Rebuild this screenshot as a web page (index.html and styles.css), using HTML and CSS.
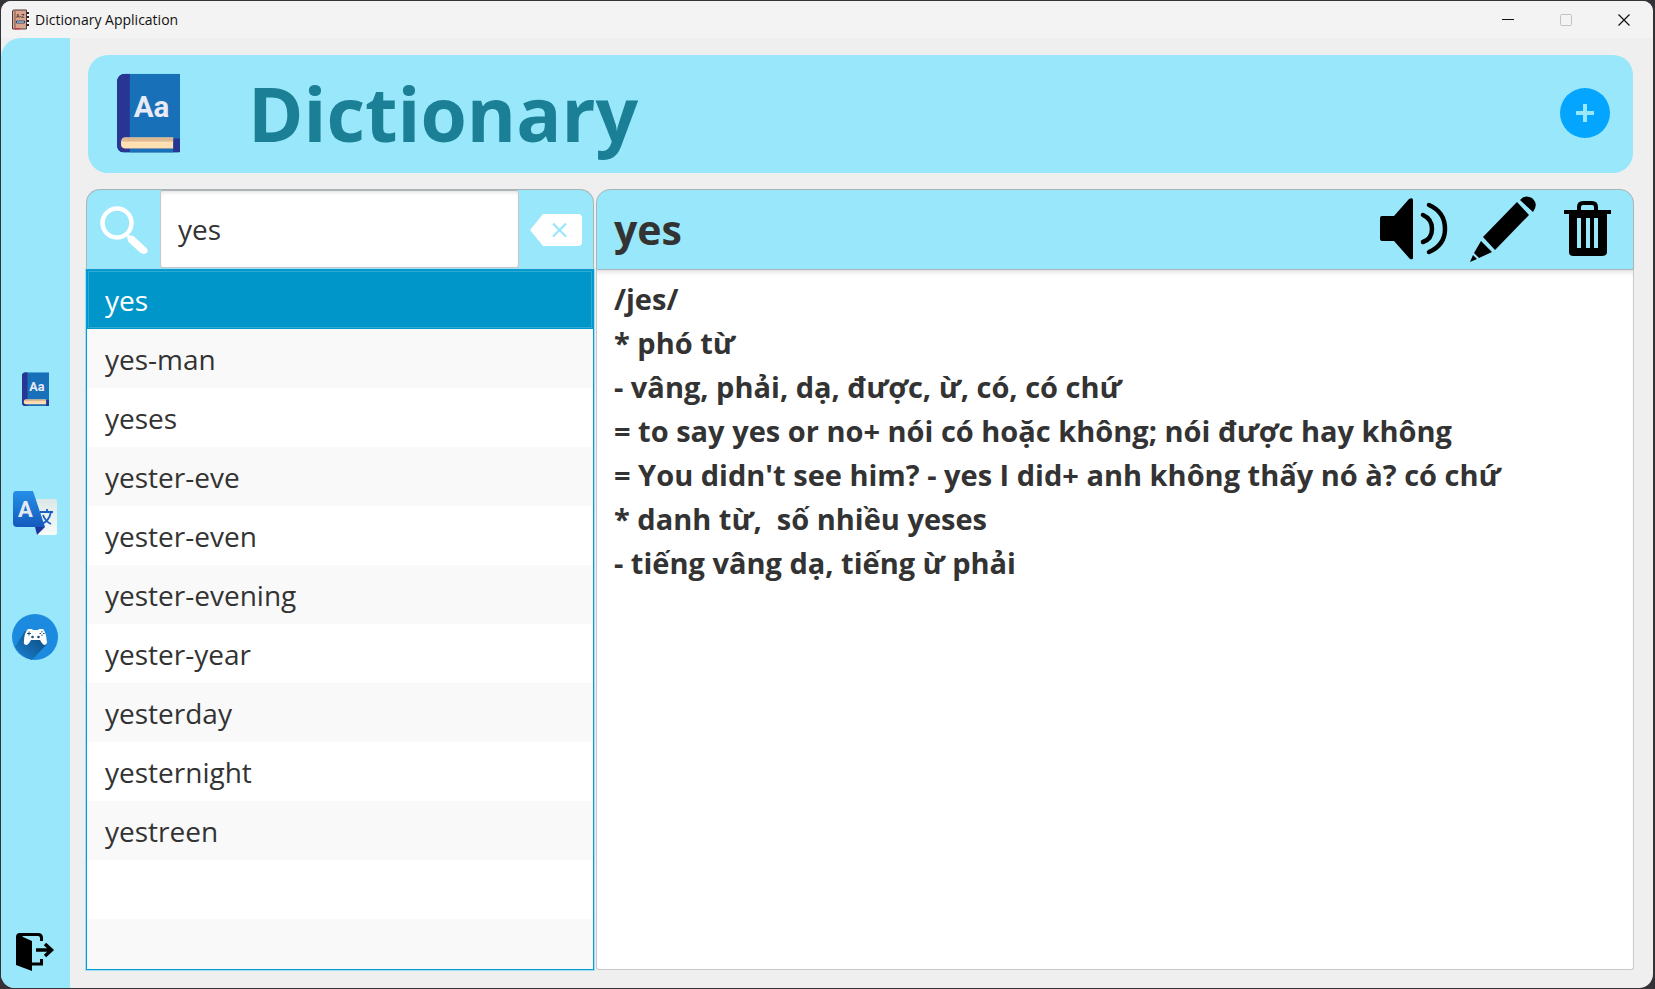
FILE: index.html
```html
<!DOCTYPE html>
<html lang="vi">
<head>
<meta charset="utf-8">
<title>Dictionary Application</title>
<link rel="stylesheet" href="styles.css">
</head>
<body>
<svg class="defs" aria-hidden="true">
  <symbol id="book" viewBox="0 0 64 80">
    <path d="M9 0H64V80H7Q0 80 0 72V9Q0 0 9 0Z" fill="#1871b8"/>
    <path d="M9 0H13V75H57V66H64V78Q64 80 61 80H7Q0 80 0 72V9Q0 0 9 0Z" fill="#283593"/>
    <path d="M13 76H57V80H13Z" fill="#1871b8"/>
    <path d="M8 65H57V76H8Q4 76 4 71Q4 65 8 65Z" fill="#ffe0b2"/>
    <path d="M8 65H57V69H5Q5 65 8 65Z" fill="#deb893"/>
    <text x="17" y="44" class="book-text">Aa</text>
  </symbol>
</svg>
<div class="window">
  <header class="titlebar">
    <svg class="app-icon" viewBox="0 0 18 20">
      <path d="M0 0H18V20H0Z" fill="#fff"/>
      <path d="M1 1Q1 0 3 0H15V19H1Z" fill="#d9a58f" stroke="#4d3734"/>
      <path d="M3.500 1V18" stroke="#7a5850"/>
      <path d="M16.500 2v2M16.500 6v2M16.500 10v2M16.500 14v2" stroke="#222" stroke-width="2"/>
      <path d="M5 13h8v-2H5Z" fill="#cfe6ff" stroke="#30466b"/>
      <path d="M3 18h5v2l-2-1-2 1Z" fill="#d3324a"/>
      <text x="4.500" y="7.500" class="az">A-Z</text>
    </svg>
    <span class="caption">Dictionary Application</span>
    <button class="win-btn" aria-label="Minimize"><svg viewBox="0 0 12 12"><path d="M0 5.500H12" stroke="#111"/></svg></button>
    <button class="win-btn" aria-label="Maximize" disabled><svg viewBox="0 0 12 12"><rect x=".5" y=".5" width="11" height="11" rx="1" fill="none" stroke="#c2c2c2"/></svg></button>
    <button class="win-btn" aria-label="Close"><svg viewBox="0 0 12 12"><path d="M.5 .5L11.500 11.500M11.500 .5L.5 11.500" stroke="#111" stroke-width="1.200"/></svg></button>
  </header>
  <div class="body">
    <nav class="sidebar">
      <div class="tools">
        <button class="tool" aria-label="Dictionary"><svg class="i-book" viewBox="0 0 64 80"><use href="#book"/></svg></button>
        <button class="tool" aria-label="Translate">
          <svg class="i-translate" viewBox="0 0 44 44">
            <defs><linearGradient id="tb" x1="0" y1="0" x2="0" y2="1"><stop offset="0" stop-color="#2590e9"/><stop offset="1" stop-color="#1459bd"/></linearGradient>
            <linearGradient id="tg" x1="0" y1="0" x2="0" y2="1"><stop offset="0" stop-color="#dbe8e8"/><stop offset="1" stop-color="#f7fbfa"/></linearGradient></defs>
            <path d="M18 8H42Q44 8 44 10V42Q44 44 42 44H24Z" fill="url(#tg)"/>
            <path d="M22 36H32L24 44Z" fill="#1c36a0"/>
            <path d="M3 0H20L32 36H4Q0 36 0 32V4Q0 0 3 0Z" fill="url(#tb)"/>
            <path d="M27 21H40M34 18V21M38 21Q36 30 29 33M30 24Q32 30 38 33" fill="none" stroke="#1b5fc4" stroke-width="1.800"/>
            <text x="5" y="26" class="tr-a">A</text>
          </svg>
        </button>
        <button class="tool" aria-label="Games">
          <svg class="i-game" viewBox="0 0 46 46">
            <defs><linearGradient id="sh" x1="1" y1="0" x2="0" y2="1"><stop offset="0" stop-color="#0d4574"/><stop offset="1" stop-color="#1a83d6"/></linearGradient></defs>
            <circle cx="23" cy="23" r="23" fill="#1c8ade"/>
            <path d="M13 17L3 33Q9 43 20 46L35 30V25Z" fill="url(#sh)"/>
            <path d="M16 15H20L21 16H26L27 15H31Q34 18 35 28Q35 31 32 31Q30 30 28 26H19Q17 30 15 31Q11 31 12 27Q12 19 16 15Z" fill="#fff"/>
            <path d="M15 19.500H19M17 17.500V21.500" stroke="#174f7c"/>
            <circle cx="20.500" cy="23" r="1.300" fill="#174f7c"/><circle cx="26.500" cy="23" r="1.300" fill="#174f7c"/>
            <path d="M30 17V22M27.500 19.500H32.500" stroke="#174f7c" stroke-dasharray="1.500 2"/>
          </svg>
        </button>
      </div>
      <button class="tool" aria-label="Exit">
        <svg class="i-exit" viewBox="0 0 38 38">
          <path d="M3 1.500H22Q25.500 1.500 25.500 5V8M16 31H25.500V26" fill="none" stroke="#000" stroke-width="3"/>
          <path d="M0 4Q0 0 4 0L7 4L16 8V38L0 32Z"/>
          <path d="M20 17H35M29 11L35.500 17L29 23" fill="none" stroke="#000" stroke-width="3.500"/>
        </svg>
      </button>
    </nav>
    <main class="content">
      <section class="banner">
        <svg class="logo" viewBox="0 0 64 80"><use href="#book"/></svg>
        <h1>Dictionary</h1>
        <button class="add" aria-label="Add word"><svg viewBox="0 0 18 18"><path d="M9 0V18M0 9H18" stroke="#98e7fa" stroke-width="4"/></svg></button>
      </section>
      <div class="panes">
        <section class="left">
          <div class="search">
            <button class="find" aria-label="Search"><svg viewBox="0 0 48 48"><circle cx="17" cy="17" r="14.500" fill="none" stroke="#fff" stroke-width="4.500"/><path d="M28 30L33 31L46 43Q48 46 44 47L41 46L29 35Z" fill="#fff" stroke="#fff" stroke-width="2" stroke-linejoin="round"/></svg></button>
            <input class="query" type="text" value="yes" aria-label="Word">
            <button class="clear" aria-label="Clear"><svg viewBox="0 0 52 32"><path d="M13 0H48Q52 0 52 4V28Q52 32 48 32H13L0 16Z" fill="#fff"/><path d="M23 9.500L36 22.500M36 9.500L23 22.500" stroke="#98e7fa" stroke-width="2.200"/></svg></button>
          </div>
          <ul class="words">
            <li class="selected">yes</li><li>yes-man</li><li>yeses</li><li>yester-eve</li><li>yester-even</li><li>yester-evening</li><li>yester-year</li><li>yesterday</li><li>yesternight</li><li>yestreen</li><li></li><li></li>
          </ul>
        </section>
        <article class="right">
          <div class="entry">
            <h2>yes</h2>
            <button class="act" aria-label="Listen"><svg class="i-sound" viewBox="0 0 67 62"><path d="M2 18H14L29 1Q33 -1 33 2V60Q33 62 30 61L14 43H2Q0 43 0 41V20Q0 18 2 18Z"/><path d="M43 17Q52 21 52 31Q52 41 43 44M49 7Q65 14 65 31Q65 47 49 54" fill="none" stroke="#000" stroke-width="4.500" stroke-linecap="round"/></svg></button>
            <button class="act" aria-label="Edit"><svg class="i-edit" viewBox="0 0 66 66"><path d="M50 4Q55 -2 62 2Q69 8 63 16ZM47 6L59 19L25 54L13 41ZM11 45L22 56L9 62L4 57ZM3 59L7 63L0 66Z"/></svg></button>
            <button class="act" aria-label="Delete"><svg class="i-trash" viewBox="0 0 47 55"><path d="M15 10V6Q15 2 19 2H28Q32 2 32 6V10" fill="none" stroke="#000" stroke-width="4"/><path fill-rule="evenodd" d="M0 9H47V13H43V51Q43 55 38 55H9Q5 55 5 51V13H0ZM13 17V47H17V17ZM22 17V47H26V17ZM30 17V47H34V17Z"/></svg></button>
          </div>
          <p class="meaning">/jes/
* phó từ
- vâng, phải, dạ, được, ừ, có, có chứ
= to say yes or no+ nói có hoặc không; nói được hay không
= You didn't see him? - yes I did+ anh không thấy nó à? có chứ
* danh từ,  số nhiều yeses
- tiếng vâng dạ, tiếng ừ phải</p>
        </article>
      </div>
    </main>
  </div>
</div>
</body>
</html>
```
FILE: styles.css
```css
* { box-sizing: border-box; }
body { margin: 0; background: #343236; font-family: "Open Sans", "Noto Sans", sans-serif; color: #333; }
button { border: 0; padding: 0; background: none; display: flex; align-items: center; justify-content: center; }
svg { display: block; flex: none; overflow: visible; }
.defs { display: none; }
.window { display: flex; flex-direction: column; height: calc(100vh - 2px); margin: 1px 2px 1px 1px; background: #efefef; border-radius: 10px 10px 14px 14px; overflow: hidden; }
.titlebar { display: flex; align-items: center; height: 37px; padding-left: 10px; background: #f3f3f3; }
.app-icon { width: 19px; height: 20px; }
.az { font: bold 5px "Liberation Sans", sans-serif; fill: #3d2a29; }
.caption { flex: 1; margin-left: 5px; font-size: 14px; color: #111; }
.win-btn { width: 58px; height: 36px; }
.win-btn svg { width: 12px; height: 12px; }
.body { flex: 1; display: flex; min-height: 0; }
.sidebar { flex: none; display: flex; flex-direction: column; width: 69px; padding-bottom: 16px; background: #98e7fa; border-top-left-radius: 20px; }
.tools { flex: 1; display: flex; flex-direction: column; justify-content: center; gap: 64px; padding-top: 56px; }
.tool { width: 68px; height: 60px; }
.sidebar > .tool { height: 40px; }
.i-book { width: 27px; height: 34px; }
.i-translate { width: 44px; height: 44px; }
.i-game { width: 46px; height: 46px; }
.i-exit { width: 38px; height: 38px; }
.book-text { font: bold 30px Roboto, sans-serif; fill: #e8eaf6; }
.tr-a { font: bold 22px Roboto, sans-serif; fill: #e6eaf0; }
.content { flex: 1; display: flex; flex-direction: column; min-width: 0; padding: 17px 19px 18px 16px; }
.banner { display: flex; align-items: center; height: 118px; margin: 0 1px 0 2px; padding: 0 23px 2px 29px; background: #98e7fa; border-radius: 20px; }
.logo { width: 63px; height: 80px; }
.banner h1 { flex: 1; margin: 0 0 0 68px; font-size: 75px; line-height: 100px; font-weight: 700; color: #1b7f95; }
.add { width: 50px; height: 50px; border-radius: 50%; background: #03a5ff; }
.add svg { width: 18px; height: 18px; }
.panes { flex: 1; display: flex; gap: 2px; min-height: 0; margin-top: 16px; }
.left { flex: 0 0 508px; display: flex; flex-direction: column; min-width: 0; }
.search { flex: none; display: flex; height: 80px; border: 1px solid #a9b4b8; border-bottom: 0; border-radius: 14px 14px 0 0; background: #98e7fa; }
.find { flex: none; width: 73px; }
.find svg { width: 48px; height: 48px; }
.query { flex: 1; min-width: 0; height: 78px; border: 1px solid #c8c8c8; border-top-color: #b0b4b5; border-radius: 3px; padding: 0 17px; box-shadow: inset 0 3px 4px -2px #ddd; font: 28px "Open Sans", sans-serif; color: #333; outline: 0; }
.clear { flex: none; width: 74px; }
.clear svg { width: 52px; height: 32px; }
.words { flex: 1; min-height: 0; margin: 0; padding: 0; overflow: hidden; list-style: none; border: 1px solid #039ed3; box-shadow: 0 0 0 1px #a6dcef; background: #fff; }
.words li { height: 59px; padding-left: 18px; font-size: 28px; line-height: 60px; }
.words li:nth-child(even) { background: #f9f9f9; }
.words .selected { background: #0096c9; color: #fff; box-shadow: inset 0 0 0 1px #0096c9, inset 0 0 0 2px #30a9d3; }
.right { flex: 1; display: flex; flex-direction: column; min-width: 0; }
.entry { flex: none; display: flex; align-items: center; height: 81px; padding: 0 22px 2px 17px; background: #98e7fa; border: 1px solid #a9b4b8; border-radius: 14px 14px 0 0; }
.entry h2 { flex: 1; margin: 0; font-size: 41px; line-height: 56px; }
.act { margin-left: 23px; }
.act:last-child { margin-left: 28px; }
.i-sound { width: 67px; height: 62px; }
.i-edit { width: 66px; height: 66px; }
.i-trash { width: 47px; height: 55px; }
.meaning { flex: 1; margin: 0; padding: 7px 17px; white-space: pre-wrap; font-size: 29px; line-height: 44px; font-weight: 700; background: #fff; border: 1px solid #c8c8c8; border-top: 0; border-radius: 0 0 3px 3px; box-shadow: inset 0 5px 5px -3px #ddd; }
```
